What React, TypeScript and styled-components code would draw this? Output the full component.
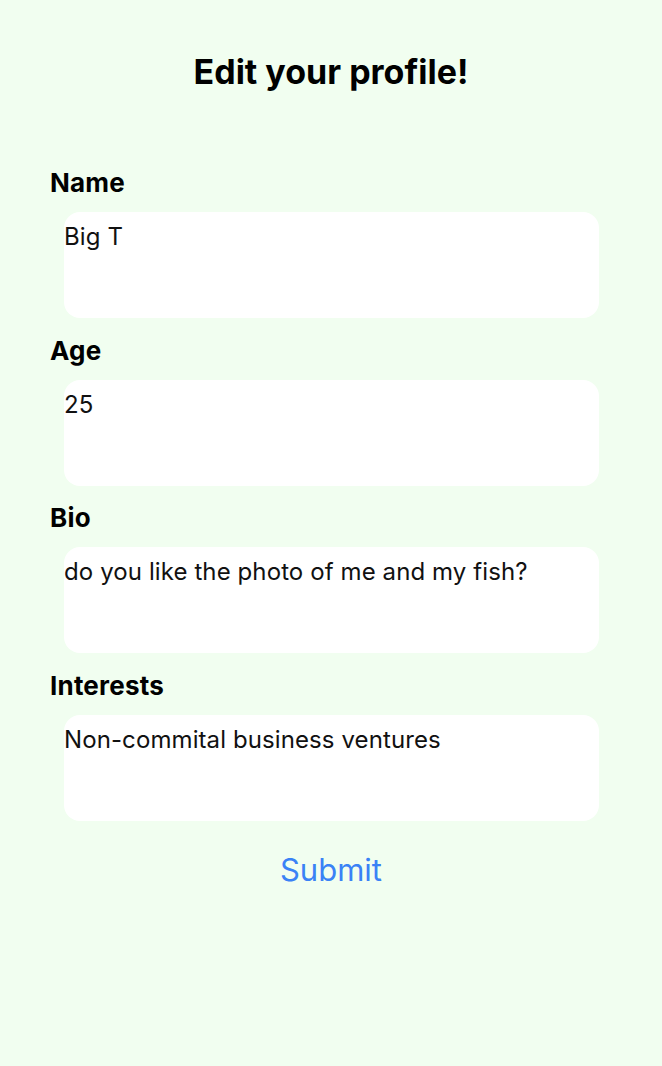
import React from "react";
import styled, { createGlobalStyle } from "styled-components";

const Global = createGlobalStyle`
  html, body { margin: 0; padding: 0; background: #f1fef0; }
  body { font-family: Inter, "Noto Sans", sans-serif; }
`;

const Page = styled.div`
  box-sizing: border-box;
  width: 662px;
  min-height: 1066px;
  background: #f1fef0;
  padding: 50px 50px 0 50px;
  display: flex;
  flex-direction: column;
`;

const Title = styled.h1`
  margin: 0 0 74px 0;
  text-align: center;
  font-size: 34px;
  font-weight: 700;
  line-height: 44px;
  color: #000;
`;

const Field = styled.div`
  display: flex;
  flex-direction: column;
  margin-bottom: 17.5px;
`;

const Label = styled.label`
  font-size: 26px;
  font-weight: 700;
  letter-spacing: 0.2px;
  line-height: 30px;
  color: #000;
  margin-bottom: 14px;
`;

const Box = styled.textarea`
  box-sizing: border-box;
  margin-left: 14px;
  width: 535px;
  height: 106px;
  border: none;
  outline: none;
  resize: none;
  background: #fff;
  border-radius: 16px;
  padding: 10px 0 0 0;
  font-family: Inter, "Noto Sans", sans-serif;
  font-size: 24px;
  letter-spacing: 0.1px;
  line-height: 30px;
  color: #111;
`;

const Submit = styled.button`
  align-self: center;
  margin-top: 12px;
  border: none;
  background: none;
  font-family: Inter, "Noto Sans", sans-serif;
  font-size: 31px;
  line-height: 40px;
  color: #3a82f6;
  padding: 0;
  cursor: pointer;
`;

const fields = [
  { label: "Name", value: "Big T" },
  { label: "Age", value: "25" },
  { label: "Bio", value: "do you like the photo of me and my fish?" },
  { label: "Interests", value: "Non-commital business ventures" },
];

export default function App() {
  return (
    <>
      <Global />
      <Page>
        <Title>Edit your profile!</Title>
        {fields.map((f) => (
          <Field key={f.label}>
            <Label>{f.label}</Label>
            <Box defaultValue={f.value} />
          </Field>
        ))}
        <Submit>Submit</Submit>
      </Page>
    </>
  );
}
